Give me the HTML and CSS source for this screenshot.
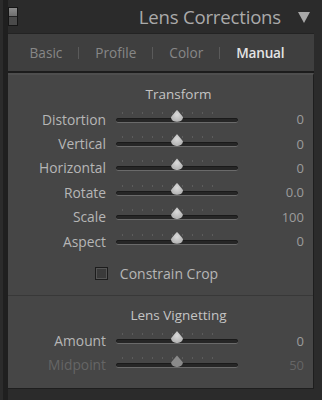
FILE: index.html
```html
<!DOCTYPE html>
<html>
<head>
<meta charset="utf-8">
<link rel="stylesheet" href="styles.css">
</head>
<body>
<div class="wrap">
  <div class="header">
    <div class="switch"><span class="on"></span><span class="off"></span></div>
    <div class="title">Lens Corrections</div>
    <svg class="tri" width="12" height="11" viewBox="0 0 12 11"><polygon points="0,0 12,0 6,11" fill="#a8a8a8"/></svg>
  </div>
  <div class="tabs">
    <span class="tab">Basic</span><span class="sep"></span>
    <span class="tab">Profile</span><span class="sep"></span>
    <span class="tab">Color</span><span class="sep"></span>
    <span class="tab active">Manual</span>
  </div>
  <div class="panel">
    <div class="section">
      <div class="heading">Transform</div>
      <div class="row"><span class="label">Distortion</span><div class="slider"><span class="knob"></span></div><span class="value">0</span></div>
      <div class="row"><span class="label">Vertical</span><div class="slider"><span class="knob"></span></div><span class="value">0</span></div>
      <div class="row"><span class="label">Horizontal</span><div class="slider"><span class="knob"></span></div><span class="value">0</span></div>
      <div class="row"><span class="label">Rotate</span><div class="slider"><span class="knob"></span></div><span class="value">0.0</span></div>
      <div class="row"><span class="label">Scale</span><div class="slider"><span class="knob"></span></div><span class="value">100</span></div>
      <div class="row"><span class="label">Aspect</span><div class="slider"><span class="knob"></span></div><span class="value">0</span></div>
      <div class="check"><span class="box"></span><span>Constrain Crop</span></div>
    </div>
    <div class="section second">
      <div class="heading">Lens Vignetting</div>
      <div class="row"><span class="label">Amount</span><div class="slider"><span class="knob"></span></div><span class="value">0</span></div>
      <div class="row dim"><span class="label">Midpoint</span><div class="slider"><span class="knob"></span></div><span class="value">50</span></div>
    </div>
  </div>
</div>
</body>
</html>
```

FILE: styles.css
```css
html, body {
  margin: 0;
  padding: 0;
  background: #2b2b2b;
  width: 322px;
  height: 400px;
  overflow: hidden;
  font-family: "Open Sans", "Noto Sans", sans-serif;
}
.wrap {
  margin-left: 3px;
  border-left: 5px solid #1f1f1f;
  width: 306px;
  height: 400px;
}
.header {
  height: 33px;
  display: flex;
  align-items: center;
  padding-right: 4px;
  box-sizing: border-box;
}
.switch {
  width: 8px;
  height: 17px;
  margin-top: -1px;
  border: 1px solid #151515;
  display: flex;
  flex-direction: column;
}
.switch .on { flex: 1; background: linear-gradient(#8c8c8c, #6e6e6e); }
.switch .off { flex: 1; background: #4a4a4a; border-top: 1px solid #222; }
.title {
  flex: 1;
  text-align: right;
  font-size: 18.6px;
  color: #aaaaaa;
  margin-right: 17px;
  letter-spacing: -0.2px;
}
.tri { margin-top: 1px; }
.tabs {
  height: 40px;
  background: #3f3f3f;
  border-top: 1px solid #232323;
  border-bottom: 2px solid #1c1c1c;
  display: flex;
  align-items: center;
  justify-content: center;
  box-sizing: border-box;
  font-size: 13.6px;
  color: #878787;
  padding-right: 8px;
}
.tab { padding: 0 16px; }
.tab.active { color: #e4e4e4; font-weight: 600; letter-spacing: -0.2px; }
.sep { width: 1px; height: 12px; background: #5a5a5a; }
.panel {
  background: #464646;
  border-top: 2px solid #4e4e4e;
  border-bottom: 1px solid #1e1e1e;
  border-right: 1px solid #1e1e1e;
  height: 316px;
  box-sizing: border-box;
}
.section { padding-top: 8px; }
.section.second {
  border-top: 1px solid #383838;
  margin-top: 12px;
  padding-top: 8px;
}
.heading {
  text-align: center;
  font-size: 13.5px;
  color: #c4c4c4;
  padding-left: 36px;
  height: 22px;
  line-height: 22px;
  margin-bottom: 2px;
}
.row {
  display: grid;
  grid-template-columns: 98px 122px 56px;
  column-gap: 10px;
  align-items: center;
  height: 24.4px;
  font-size: 13.8px;
}
.label { text-align: right; color: #b6b6b6; }
.value { text-align: right; color: #9c9c9c; font-size: 13px; }
.dim .label, .dim .value { color: #656565; }
.slider {
  position: relative;
  height: 4px;
  margin-top: 2px;
  border-radius: 3px;
  background: #262626;
  border-bottom: 1px solid #6a6a6a;
  box-shadow: inset 0 1px 0 #1a1a1a;
}
.slider::before {
  content: "";
  position: absolute;
  left: 6px;
  right: 22px;
  top: -6px;
  height: 2px;
  background: repeating-linear-gradient(90deg, #5c5c5c 0 1px, transparent 1px 10px);
}
.knob {
  position: absolute;
  left: 55px;
  top: -8px;
  width: 12px;
  height: 12px;
  background: radial-gradient(circle at 50% 40%, #dadada, #a5a5a5);
  border-radius: 50% 50% 45% 45% / 60% 60% 40% 40%;
  clip-path: polygon(50% 0, 100% 60%, 100% 100%, 0 100%, 0 60%);
}
.dim .knob { background: #8a8a8a; }
.check {
  display: flex;
  align-items: center;
  justify-content: center;
  gap: 12px;
  margin-top: 11px;
  padding-right: 8px;
  font-size: 14px;
  color: #b6b6b6;
}
.box {
  width: 11px;
  height: 11px;
  border: 1px solid #1c1c1c;
  background: #3a3a3a;
  box-shadow: inset 0 0 0 1px #555;
}
```
